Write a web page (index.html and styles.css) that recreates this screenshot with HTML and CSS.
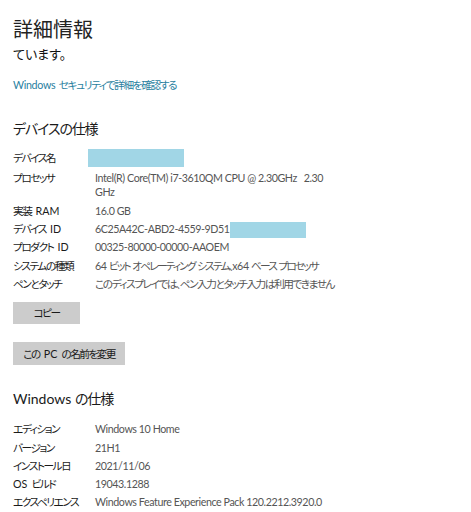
FILE: index.html
```html
<!DOCTYPE html>
<html lang="ja">
<head>
<meta charset="utf-8">
<title>詳細情報</title>
<link rel="stylesheet" href="styles.css">
</head>
<body>
<main class="page">
  <h1 class="title">詳細情報</h1>
  <p class="intro">ています。</p>
  <a class="link" href="#">Windows <span class="ja">セキュリティで詳細を確認する</span></a>

  <h2 class="heading heading-device"><span class="ja">デバイスの仕様</span></h2>
  <dl class="specs specs-device">
    <div class="row row-tall">
      <dt><span class="ja">デバイス名</span></dt>
      <dd><span class="redact redact-name"></span></dd>
    </div>
    <div class="row">
      <dt><span class="ja">プロセッサ</span></dt>
      <dd class="wrap">Intel(R) Core(TM) i7-3610QM CPU @ 2.30GHz&nbsp;&nbsp; 2.30 GHz</dd>
    </div>
    <div class="row">
      <dt><span class="ja">実装</span> RAM</dt>
      <dd>16.0 GB</dd>
    </div>
    <div class="row">
      <dt><span class="ja">デバイス</span> ID</dt>
      <dd>6C25A42C-ABD2-4559-9D51<span class="redact redact-id"></span></dd>
    </div>
    <div class="row">
      <dt><span class="ja">プロダクト</span> ID</dt>
      <dd>00325-80000-00000-AAOEM</dd>
    </div>
    <div class="row">
      <dt><span class="ja">システムの種類</span></dt>
      <dd class="tight">64 <span class="ja">ビット</span> <span class="ja">オペレーティング</span> <span class="ja">システム、</span>x64 <span class="ja">ベース</span> <span class="ja">プロセッサ</span></dd>
    </div>
    <div class="row">
      <dt><span class="ja">ペンとタッチ</span></dt>
      <dd><span class="ja">このディスプレイでは、ペン入力とタッチ入力は利用できません</span></dd>
    </div>
  </dl>

  <div class="actions">
    <button class="btn btn-copy" type="button"><span class="ja">コピー</span></button>
    <button class="btn btn-rename" type="button"><span class="ja">この</span> PC <span class="ja">の名前を変更</span></button>
  </div>

  <h2 class="heading heading-windows">Windows <span class="ja">の仕様</span></h2>
  <dl class="specs specs-windows">
    <div class="row">
      <dt><span class="ja">エディション</span></dt>
      <dd>Windows 10 Home</dd>
    </div>
    <div class="row">
      <dt><span class="ja">バージョン</span></dt>
      <dd>21H1</dd>
    </div>
    <div class="row">
      <dt><span class="ja">インストール日</span></dt>
      <dd>2021/11/06</dd>
    </div>
    <div class="row">
      <dt>OS <span class="ja">ビルド</span></dt>
      <dd>19043.1288</dd>
    </div>
    <div class="row">
      <dt><span class="ja">エクスペリエンス</span></dt>
      <dd>Windows Feature Experience Pack 120.2212.3920.0</dd>
    </div>
  </dl>
</main>
</body>
</html>
```

FILE: styles.css
```css
html, body {
  margin: 0;
  padding: 0;
  background: #ffffff;
}

body {
  font-family: "Lato", "Noto Sans CJK JP", sans-serif;
  font-feature-settings: "palt";
  color: #1a1a1a;
  width: 471px;
  height: 512px;
  overflow: hidden;
}

.page {
  padding: 16px 0 0 13px;
  display: flex;
  flex-direction: column;
  align-items: flex-start;
}

.ja {
  letter-spacing: -0.15em;
}

.title {
  margin: 0;
  font-family: "Noto Sans CJK JP", sans-serif;
  font-size: 20px;
  line-height: 26px;
  font-weight: 400;
  color: #222;
}

.intro {
  margin: 2px 0 0;
  font-family: "Noto Sans CJK JP", sans-serif;
  font-size: 13px;
  line-height: 20px;
  color: #111;
}

.link {
  margin-top: 13px;
  font-size: 10.7px;
  line-height: 16px;
  letter-spacing: -0.03em;
  word-spacing: 1px;
  color: #2a7f9f;
  text-decoration: none;
}

.link .ja {
  letter-spacing: -0.13em;
}

.heading {
  margin: 0;
  font-size: 14px;
  line-height: 20px;
  font-weight: 400;
  color: #1a1a1a;
}

.heading .ja {
  letter-spacing: -0.08em;
}

.heading-device {
  margin-top: 26px;
}

.specs {
  margin: 0;
  display: flex;
  flex-direction: column;
  gap: 4.25px;
  font-size: 10.7px;
  line-height: 14px;
}

.specs-device {
  margin-top: 10px;
}

.row {
  display: grid;
  grid-template-columns: 82px 240px;
}

.row-tall {
  min-height: 18px;
  align-items: center;
}

dt {
  margin: 0;
  color: #1a1a1a;
  white-space: nowrap;
  word-spacing: 1.4px;
}

dt .ja {
  letter-spacing: -0.14em;
}

dd {
  margin: 0;
  color: #555;
  white-space: nowrap;
  letter-spacing: -0.04em;
}

dd .ja {
  letter-spacing: -0.14em;
}

dd.tight .ja {
  letter-spacing: -0.17em;
}

dd.wrap {
  white-space: normal;
}

.redact {
  display: inline-block;
  background: #a1d6e6;
}

.redact-name {
  width: 96px;
  height: 18px;
  margin-left: -7px;
  vertical-align: top;
}

.redact-id {
  width: 76px;
  height: 16px;
  margin: -2px 0;
  vertical-align: middle;
}

.actions {
  margin-top: 11.5px;
  display: flex;
  flex-direction: column;
  align-items: flex-start;
  gap: 18px;
}

.btn {
  border: none;
  background: #cccccc;
  color: #1a1a1a;
  font-family: inherit;
  font-feature-settings: "palt";
  font-size: 10.7px;
  line-height: 14px;
  word-spacing: 1.4px;
  padding: 0;
  height: 22px;
}

.btn-copy {
  width: 67px;
}

.btn-rename {
  width: 112px;
  height: 23px;
}

.heading-windows {
  margin-top: 24px;
}

.specs-windows {
  margin-top: 13px;
}
```
